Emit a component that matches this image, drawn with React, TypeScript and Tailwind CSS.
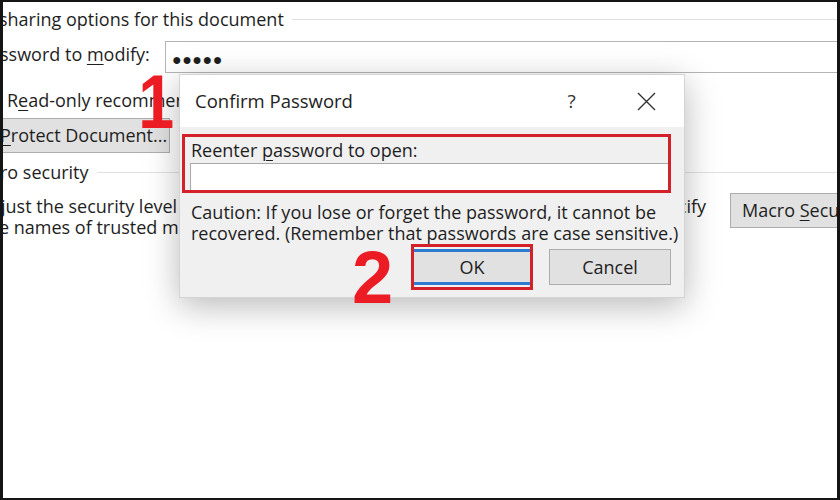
import React from "react";

const font = { fontFamily: '"Open Sans", "Noto Sans", sans-serif' };

const U = ({ children }: { children: React.ReactNode }) => <span className="underline underline-offset-[3px] decoration-1">{children}</span>;

const Background = () => (
    <div className="flex flex-col text-[18px] text-[#1e1e1e]">
        <div className="flex items-center h-[35px]">
            <span className="-ml-[4px] whitespace-nowrap">sharing options for this document</span>
            <div className="flex-1 h-px bg-[#e2e2e2] ml-[8px]" />
        </div>
        <div className="flex items-center h-[32px] mt-[4px]">
            <span className="-ml-[3px] w-[165px] shrink-0 whitespace-nowrap pb-[6px]">ssword to <U>m</U>odify:</span>
            <div className="flex-1 h-full -mr-[20px] border border-[#b4b4b4] bg-white flex items-center pl-[6px] pt-[4px] text-[16px] tracking-[0.5px] font-bold">●●●●●</div>
        </div>
        <div className="flex items-center h-[45px] pt-[10px]">
            <span className="ml-[4px] whitespace-nowrap">R<U>e</U>ad-only recommended</span>
        </div>
        <div className="flex h-[35px]">
            <div className="-ml-[12px] w-[179px] h-full border border-[#adadad] bg-[#e1e1e1] flex items-center pl-[8px] whitespace-nowrap">
                <span><U>P</U>rotect Document...</span>
            </div>
        </div>
        <div className="flex items-center h-[38px]">
            <span className="-ml-[3px] whitespace-nowrap">ro security</span>
            <div className="flex-1 h-px bg-[#e2e2e2] ml-[8px]" />
        </div>
        <div className="flex h-[45px]">
            <div className="w-[703px] shrink-0 flex flex-col leading-[21px] pt-[5px]">
                <div className="flex justify-between whitespace-nowrap">
                    <span className="-ml-[2px]">just the security level for opening files</span>
                    <span>and specify</span>
                </div>
                <span className="-ml-[4px] whitespace-nowrap">e names of trusted macro developers.</span>
            </div>
            <div className="ml-[24px] mt-[2px] h-[35px] w-[140px] shrink-0 border border-[#adadad] bg-[#e1e1e1] flex items-center pl-[11px] whitespace-nowrap">
                <span>Macro <U>S</U>ecurity...</span>
            </div>
        </div>
    </div>
);

const Dialog = () => (
    <div className="absolute left-[176px] top-[72px] w-[506px] h-[224px] bg-[#f0f0f0] border border-[#d4d4d4] shadow-[0_8px_32px_rgba(0,0,0,0.28)] flex flex-col text-[18px] text-[#1e1e1e]">
        <div className="h-[52px] bg-white flex items-center">
            <span className="pl-[15px] text-[18.5px] text-[#222]">Confirm Password</span>
            <div className="ml-auto flex h-full">
                <div className="w-[75px] flex items-center justify-center text-[19px] text-[#333]">?</div>
                <div className="w-[75px] flex items-center justify-center">
                    <svg width="19" height="19" viewBox="0 0 19 19" fill="none" stroke="#333" strokeWidth="1.4">
                        <path d="M1 1 L18 18 M18 1 L1 18" />
                    </svg>
                </div>
            </div>
        </div>
        <div className="ml-[2px] mt-[7px] w-[489px] h-[59px] border-[3px] border-[#d42028] flex flex-col">
            <div className="h-[26px] pl-[6px] flex items-center pt-[1px] whitespace-nowrap">
                <span>Reenter <U>p</U>assword to open:</span>
            </div>
            <div className="flex-1 ml-[5px] bg-white border-t border-l border-[#a8a8a8]" />
        </div>
        <div className="pl-[11px] mt-[9px] leading-[21px] whitespace-nowrap">
            <div>Caution: If you lose or forget the password, it cannot be</div>
            <div>recovered. (Remember that passwords are case sensitive.)</div>
        </div>
        <div className="flex pl-[231px] gap-[16px] items-start">
            <div className="w-[122px] h-[46px] border-[3px] border-[#d42028] py-[2px]">
                <div className="h-full bg-[#e1e1e1] border-y-[3px] border-[#2e7ad1] flex items-center justify-center">OK</div>
            </div>
            <div className="mt-[5px] w-[122px] h-[36px] border border-[#adadad] bg-[#e1e1e1] flex items-center justify-center">Cancel</div>
        </div>
    </div>
);

const Marker = ({ n, className }: { n: string; className: string }) => (
    <div className={`absolute font-bold text-[#ec1c24] leading-none ${className}`} style={{ fontFamily: '"Liberation Sans", Arial, sans-serif' }}>
        {n}
    </div>
);

export default function App() {
    return (
        <div className="w-[840px] h-[500px] bg-white border-l-[3px] border-t-[2px] border-r-[3px] border-b-[2px] border-[#151515] relative overflow-hidden" style={font}>
            <Background />
            <Dialog />
            <Marker n="1" className="left-[132px] top-[62px] text-[76px] scale-x-[0.85]" />
            <Marker n="2" className="left-[349px] top-[239px] text-[74px]" />
        </div>
    );
}
